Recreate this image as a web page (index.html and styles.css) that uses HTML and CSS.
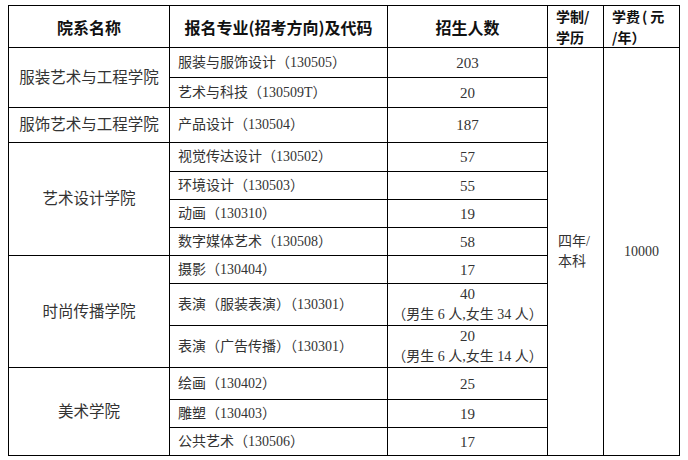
FILE: index.html
```html
<!DOCTYPE html>
<html lang="zh-CN">
<head>
<meta charset="utf-8">
<link rel="stylesheet" href="styles.css">
</head>
<body>
<table class="plan">
  <colgroup>
    <col class="c1"><col class="c2"><col class="c3"><col class="c4"><col class="c5">
  </colgroup>
  <thead>
    <tr class="h42">
      <th class="center">院系名称</th>
      <th class="center">报名专业(招考方向)及代码</th>
      <th class="center">招生人数</th>
      <th class="left two-line">学制/<br>学历</th>
      <th class="left two-line">学费<span class="paren">(</span>元<br>/年）</th>
    </tr>
  </thead>
  <tbody>
    <tr class="h30">
      <td class="college" rowspan="2">服装艺术与工程学院</td>
      <td class="major">服装与服饰设计（130505）</td>
      <td class="num">203</td>
      <td class="span" rowspan="14">四年/<br>本科</td>
      <td class="fee" rowspan="14">10000</td>
    </tr>
    <tr class="h30">
      <td class="major">艺术与科技（130509T）</td>
      <td class="num">20</td>
    </tr>
    <tr class="h35">
      <td class="college">服饰艺术与工程学院</td>
      <td class="major">产品设计（130504）</td>
      <td class="num">187</td>
    </tr>
    <tr class="h29">
      <td class="college" rowspan="4">艺术设计学院</td>
      <td class="major">视觉传达设计（130502）</td>
      <td class="num">57</td>
    </tr>
    <tr class="h28">
      <td class="major">环境设计（130503）</td>
      <td class="num">55</td>
    </tr>
    <tr class="h28">
      <td class="major">动画（130310）</td>
      <td class="num">19</td>
    </tr>
    <tr class="h28">
      <td class="major">数字媒体艺术（130508）</td>
      <td class="num">58</td>
    </tr>
    <tr class="h28">
      <td class="college" rowspan="3">时尚传播学院</td>
      <td class="major">摄影（130404）</td>
      <td class="num">17</td>
    </tr>
    <tr class="h40">
      <td class="major">表演（服装表演）（130301）</td>
      <td class="num two">40<br><span class="note">（男生 6 人,女生 34 人）</span></td>
    </tr>
    <tr class="h42">
      <td class="major">表演（广告传播）（130301）</td>
      <td class="num two">20<br><span class="note">（男生 6 人,女生 14 人）</span></td>
    </tr>
    <tr class="h32">
      <td class="college" rowspan="3">美术学院</td>
      <td class="major">绘画（130402）</td>
      <td class="num">25</td>
    </tr>
    <tr class="h28">
      <td class="major">雕塑（130403）</td>
      <td class="num">19</td>
    </tr>
    <tr class="h28">
      <td class="major">公共艺术（130506）</td>
      <td class="num">17</td>
    </tr>
  </tbody>
</table>
</body>
</html>
```
FILE: styles.css
```css
html, body {
  margin: 0;
  background: #fff;
}
body {
  padding: 5px 0 0 8px;
  font-family: "Liberation Serif", "Noto Sans CJK SC", serif;
  color: #333;
}
.plan {
  border-collapse: collapse;
  table-layout: fixed;
  width: 671px;
}
.c1 { width: 161px; }
.c2 { width: 218px; }
.c3 { width: 160px; }
.c4 { width: 56px; }
.c5 { width: 76px; }
.plan th, .plan td {
  border: 1px solid #000;
  padding: 0;
  line-height: 18px;
}
.plan th {
  font-family: "Noto Sans CJK SC", sans-serif;
  font-weight: bold;
  font-size: 16px;
  color: #111;
  line-height: 20px;
  white-space: nowrap;
}
.plan th.two-line {
  font-size: 14px;
  line-height: 20.5px;
}
.plan th.center { text-align: center; }
.plan th.left { text-align: left; padding-left: 8px; }
.paren { margin: 0 3px 0 2px; }
.h42 { height: 42px; }
.h40 { height: 40px; }
.h35 { height: 35px; }
.h32 { height: 32px; }
.h30 { height: 30px; }
.h29 { height: 29px; }
.h28 { height: 28px; }
.college {
  text-align: center;
  font-size: 15.5px;
  white-space: nowrap;
}
.major {
  text-align: left;
  padding-left: 8px !important;
  font-size: 14px;
  white-space: nowrap;
}
.num {
  text-align: center;
  font-size: 15px;
}
.plan td.num.two { line-height: 20px; }
.note { font-size: 14px; }
.plan td.span {
  text-align: left;
  padding-left: 10px;
  font-size: 14px;
  line-height: 20px;
}
.fee {
  text-align: center;
  font-size: 14px;
}
```
